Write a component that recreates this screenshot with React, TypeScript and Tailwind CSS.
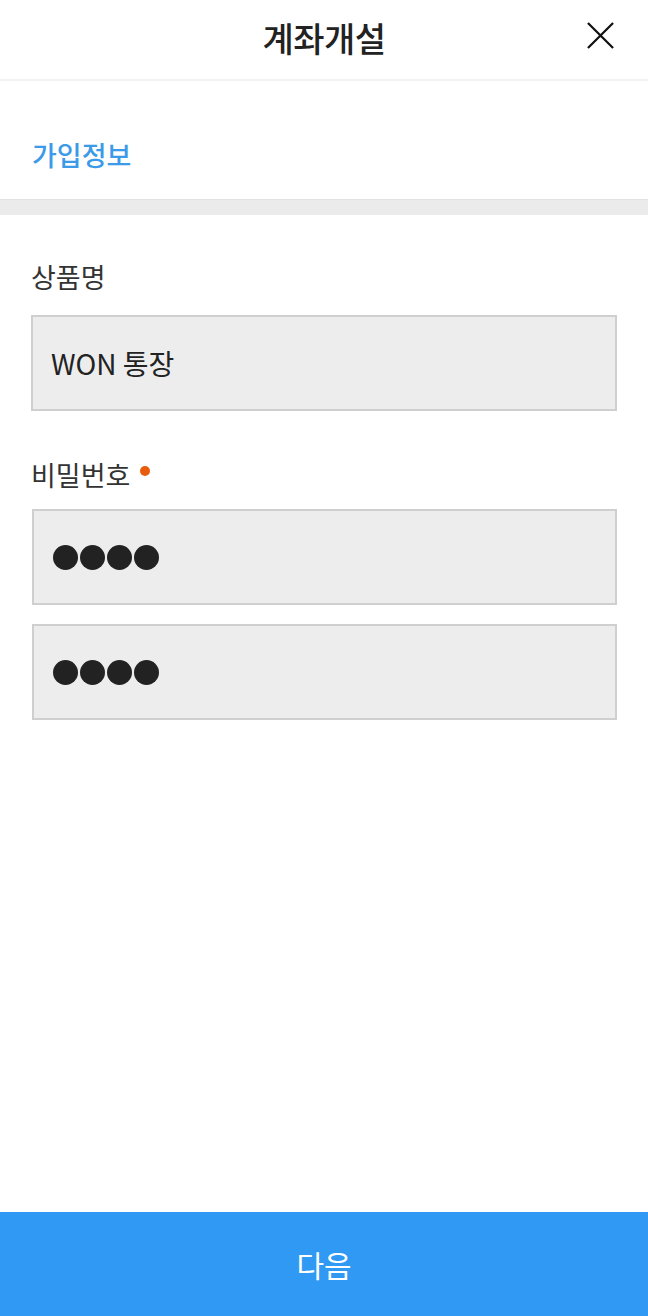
import React from 'react';

const font = { fontFamily: '"Noto Sans CJK KR", "Noto Sans", sans-serif' };

function Dots() {
  return (
    <div className="flex gap-[2px]">
      {[0, 1, 2, 3].map((i) => (
        <span key={i} className="block w-[25px] h-[25px] rounded-full bg-[#222222]" />
      ))}
    </div>
  );
}

export default function App() {
  return (
    <div className="w-[648px] h-[1316px] bg-white flex flex-col" style={font}>
      {/* 헤더 */}
      <div className="relative h-[81px] border-b-2 border-[#f2f2f2] flex items-center justify-center">
        <h1 className="text-[34px] font-medium text-[#222222] leading-none -mt-[4px] tracking-[-0.5px]">계좌개설</h1>
        <button className="absolute right-[33px] top-[21px] w-[29px] h-[29px] text-[#111111]">
          <svg viewBox="0 0 30 30" className="w-full h-full" fill="none" stroke="currentColor" strokeWidth="2.3">
            <path d="M2 2 L28 28 M28 2 L2 28" />
          </svg>
        </button>
      </div>

      {/* 섹션 제목 */}
      <div className="h-[118px] px-[32px] pt-[60px]">
        <p className="text-[27px] font-medium text-[#3b9be8] leading-none">가입정보</p>
      </div>
      <div className="h-[16px] bg-[#ebebeb] border-t border-[#e2e2e2]" />

      {/* 폼 */}
      <div className="flex-1 px-[31px] pt-[46px]">
        <p className="text-[27px] text-[#333333] leading-none pt-[2px]">상품명</p>
        <div className="mt-[25px] h-[96px] bg-[#ededed] border-2 border-[#cfcfcf] flex items-center px-[18px]">
          <span className="text-[28px] text-[#222222] leading-none">WON 통장</span>
        </div>

        <div className="mt-[50px] flex items-start">
          <p className="text-[27px] text-[#333333] leading-none">비밀번호</p>
          <span className="ml-[10px] mt-[5px] block w-[10px] h-[10px] rounded-full bg-[#e85d0c]" />
        </div>
        <div className="mt-[21px] ml-[1px] h-[96px] bg-[#ededed] border-2 border-[#cfcfcf] flex items-center px-[19px]">
          <Dots />
        </div>
        <div className="mt-[19px] ml-[1px] h-[96px] bg-[#ededed] border-2 border-[#cfcfcf] flex items-center px-[19px]">
          <Dots />
        </div>
      </div>

      {/* 하단 버튼 */}
      <button className="h-[104px] w-full bg-[#2f99f3] text-white text-[30px] leading-none">
        다음
      </button>
    </div>
  );
}
